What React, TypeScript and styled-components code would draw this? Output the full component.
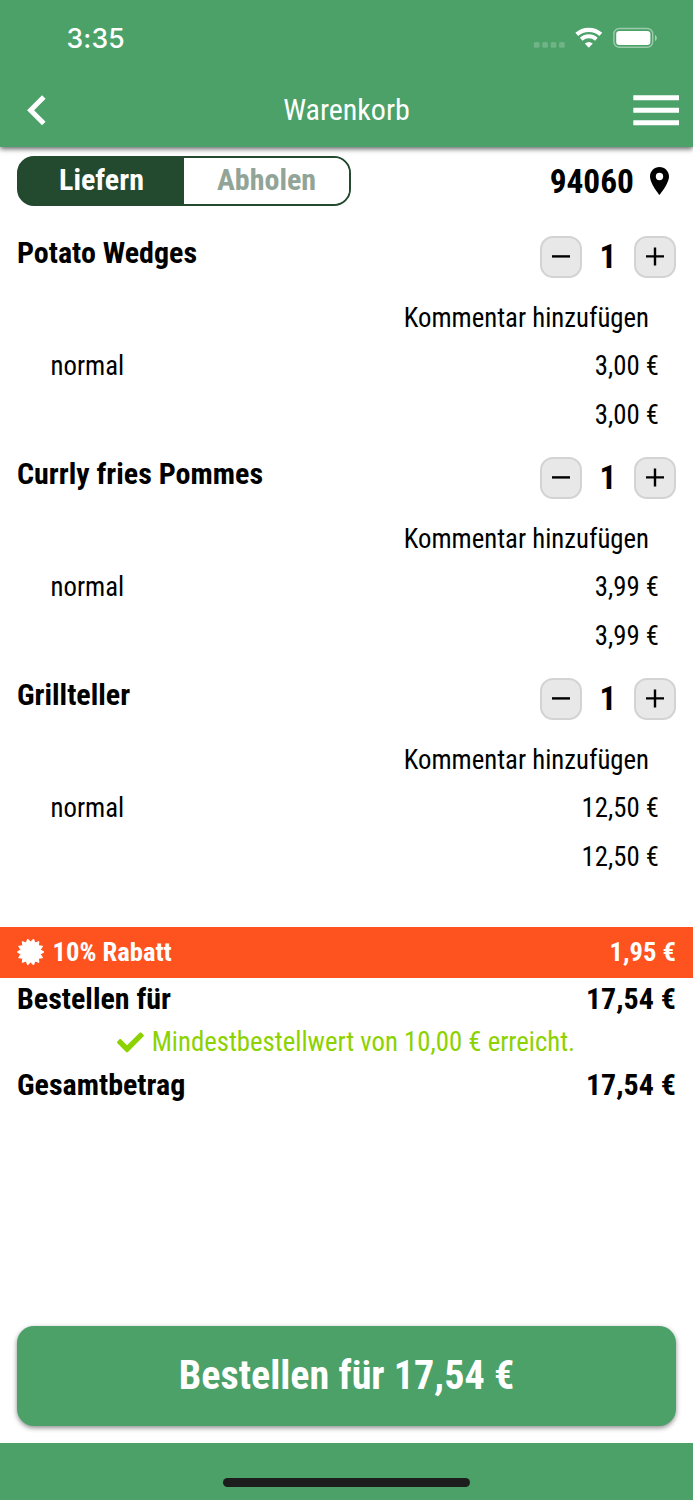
import React from "react";
import styled, { createGlobalStyle } from "styled-components";
import { FaCheck } from "react-icons/fa";

const green = "#4ba168";
const darkGreen = "#23492f";

const Global = createGlobalStyle`
  * { box-sizing: border-box; }
  body { margin: 0; background: #fff; }
  button { font: inherit; color: inherit; padding: 0; }
`;

const Screen = styled.div`
  width: 693px;
  height: 1500px;
  display: flex;
  flex-direction: column;
  background: #fff;
  color: #000;
  font-family: "Roboto Condensed", Roboto, sans-serif;
  font-stretch: 75%;
  font-size: 26.75px;
  overflow: hidden;
`;

const Header = styled.header`
  height: 147px;
  flex: none;
  background: ${green};
  color: #fff;
  box-shadow: 0 2px 5px rgba(0, 0, 0, 0.6);
`;

const StatusBar = styled.div`
  height: 73px;
  display: flex;
  justify-content: space-between;
  align-items: center;
  padding: 3px 36px 0 66.5px;
`;

const Clock = styled.span`
  font-family: Inter, sans-serif;
  font-stretch: normal;
  font-weight: 500;
  font-size: 26.5px;
  letter-spacing: 0.2px;
`;

const NavBar = styled.div`
  height: 73px;
  display: grid;
  grid-template-columns: 72px 1fr 72px;
  align-items: center;
`;

const NavTitle = styled.h1`
  margin: 0;
  font-size: 30px;
  font-weight: 400;
  line-height: 36px;
  text-align: center;
`;

const IconButton = styled.button`
  border: 0;
  background: none;
  display: flex;
`;

const TopRow = styled.div`
  height: 50px;
  margin: 9px 24px 0 17px;
  flex: none;
  display: flex;
  justify-content: space-between;
`;

const Toggle = styled.div`
  width: 334px;
  height: 50px;
  display: flex;
  border: 2px solid ${darkGreen};
  border-radius: 17px;
  background: linear-gradient(90deg, ${darkGreen} 50%, #fff 50%);
  overflow: hidden;
`;

const ToggleOption = styled.button<{ $active?: boolean }>`
  flex: 1;
  border: 0;
  font-size: 30px;
  font-weight: 700;
  line-height: 44px;
  padding-bottom: 2px;
  color: ${(p) => (p.$active ? "#fff" : "#91a497")};
  background: ${(p) => (p.$active ? darkGreen : "#fff")};
`;

const Postcode = styled.div`
  display: flex;
  align-items: center;
  gap: 16px;
  font-size: 33.4px;
  font-weight: 700;
`;

const Pin = styled.svg`
  margin-bottom: 1px;
`;

const Items = styled.section`
  padding-top: 21px;
  height: 721px;
  flex: none;
`;

const Item = styled.article`
  height: 221px;
  padding-top: 9px;
`;

const ItemHead = styled.div`
  height: 58px;
  padding: 0 17px;
  display: flex;
  justify-content: space-between;
`;

const ItemName = styled.h2`
  margin: 0;
  font-size: 30px;
  font-weight: 700;
  line-height: 34px;
`;

const Stepper = styled.div`
  display: grid;
  grid-template-columns: 42px 52px 42px;
  height: 42px;
  align-items: center;
  text-align: center;
  font-size: 33.5px;
  font-weight: 700;
`;

const Quantity = styled.span`
  padding-bottom: 2px;
`;

const StepButton = styled.button`
  width: 42px;
  height: 42px;
  display: flex;
  align-items: center;
  justify-content: center;
  background: #e8e8e8;
  border: 2px solid #d3d3d3;
  border-radius: 13px;
`;

const Line = styled.div<{ $inset?: number }>`
  height: 48.4px;
  line-height: 48.4px;
  padding: 0 ${(p) => p.$inset ?? 34}px 0 50.5px;
  display: flex;
  justify-content: space-between;
`;

const Discount = styled.div`
  height: 51px;
  flex: none;
  background: #fe521f;
  color: #fff;
  font-size: 26.6px;
  font-weight: 700;
  padding: 0 17px 2px;
  display: flex;
  align-items: center;
  gap: 7.5px;
`;

const Amount = styled.span`
  margin-left: auto;
`;

const TotalRow = styled.div`
  height: 43px;
  flex: none;
  padding: 0 17px;
  display: flex;
  font-size: 30px;
  font-weight: 700;
  line-height: 41px;
`;

const MinimumNote = styled.div`
  height: 43px;
  flex: none;
  display: flex;
  align-items: center;
  justify-content: center;
  gap: 8px;
  padding-right: 1px;
  color: #8cd200;
`;

const MinimumText = styled.span`
  padding-bottom: 2px;
`;

const OrderButton = styled.button`
  margin: auto 17px 17px;
  height: 100px;
  flex: none;
  border: 0;
  border-radius: 17px;
  padding-bottom: 2px;
  background: ${green};
  color: #fff;
  font-size: 40.1px;
  font-weight: 700;
  box-shadow: 0 2px 5px rgba(0, 0, 0, 0.45);
`;

const Footer = styled.footer`
  height: 57px;
  flex: none;
  background: ${green};
  display: flex;
  justify-content: center;
  align-items: flex-end;
  padding-bottom: 13.5px;
`;

const HomeIndicator = styled.div`
  width: 247px;
  height: 8.5px;
  border-radius: 5px;
  background: #1d1d1d;
`;

const Step = ({ plus }: { plus?: boolean }) => (
  <StepButton aria-label={plus ? "Mehr" : "Weniger"}>
    <svg width="18" height="20" viewBox="0 0 18 20" stroke="#000" strokeWidth="2.4">
      <path d={plus ? "M0 9.4H18M9 0.4V18.4" : "M0 9.4H18"} />
    </svg>
  </StepButton>
);

const StatusIcons = () => (
  <svg width="124" height="24" viewBox="533 26 124 24">
    <g fill="#fff" fillOpacity="0.2">
      {[533.8, 542.2, 550.6, 559].map((x) => (
        <rect key={x} x={x} y="42" width="5.8" height="5.8" rx="1.5" />
      ))}
    </g>
    <g fill="none" stroke="#fff">
      <path d="M576.8 34.4C583.3 28.3 594.3 28.3 600.8 34.4" strokeWidth="4.2" />
      <path d="M581.2 39.2C585.6 35.3 592 35.3 596.4 39.2" strokeWidth="4" />
    </g>
    <path d="M584.8 43.6Q588.8 40.2 592.8 43.6L588.8 47.8Z" fill="#fff" />
    <rect x="613.9" y="28.5" width="38.8" height="18.8" rx="5.5" fill="none" stroke="#fff" strokeOpacity="0.45" strokeWidth="1.4" />
    <rect x="616.2" y="31" width="34.2" height="14" rx="3.3" fill="#fff" />
    <path d="M655 35c2.4 1 2.4 5 0 6z" fill="#fff" fillOpacity="0.5" />
  </svg>
);

const sealPoints = Array.from({ length: 28 }, (_, i) => {
  const r = i % 2 ? 13.3 : 10;
  const a = (i * Math.PI) / 14;
  return `${13.6 + r * Math.sin(a)},${14 - r * Math.cos(a)}`;
}).join(" ");

const items = [
  { name: "Potato Wedges", price: "3,00 €" },
  { name: "Currly fries Pommes", price: "3,99 €" },
  { name: "Grillteller", price: "12,50 €" },
];

export default function App() {
  return (
    <Screen>
      <Global />
      <Header>
        <StatusBar>
          <Clock>3:35</Clock>
          <StatusIcons />
        </StatusBar>
        <NavBar>
          <IconButton aria-label="Zurück">
            <svg width="72" height="36" viewBox="0 0 72 36">
              <path d="M43.8 5 30.6 18.2 43.8 31.4" fill="none" stroke="#fff" strokeWidth="5" />
            </svg>
          </IconButton>
          <NavTitle>Warenkorb</NavTitle>
          <IconButton aria-label="Menü">
            <svg width="72" height="36" viewBox="0 0 72 36">
              <path d="M12.3 5.8H58M12.3 18.3H58M12.3 30.8H58" stroke="#fff" strokeWidth="5" />
            </svg>
          </IconButton>
        </NavBar>
      </Header>
      <TopRow>
        <Toggle>
          <ToggleOption $active>Liefern</ToggleOption>
          <ToggleOption>Abholen</ToggleOption>
        </Toggle>
        <Postcode>
          <span>94060</span>
          <Pin width="19" height="28" viewBox="0 0 19 28">
            <path d="M9.5 0C4.2 0 0 4.2 0 9.5 0 16.5 9.5 28 9.5 28S19 16.5 19 9.5C19 4.2 14.8 0 9.5 0Zm0 13.2a3.7 3.7 0 1 1 0-7.4 3.7 3.7 0 0 1 0 7.4Z" />
          </Pin>
        </Postcode>
      </TopRow>
      <Items>
        {items.map((item) => (
          <Item key={item.name}>
            <ItemHead>
              <ItemName>{item.name}</ItemName>
              <Stepper>
                <Step />
                <Quantity>1</Quantity>
                <Step plus />
              </Stepper>
            </ItemHead>
            <Line $inset={44}>
              <span />
              <span>Kommentar hinzufügen</span>
            </Line>
            <Line>
              <span>normal</span>
              <span>{item.price}</span>
            </Line>
            <Line>
              <span />
              <span>{item.price}</span>
            </Line>
          </Item>
        ))}
      </Items>
      <Discount>
        <svg width="28" height="28" viewBox="0 0 28 28">
          <polygon points={sealPoints} fill="#fff" stroke="#fff" strokeWidth="1" strokeLinejoin="round" />
        </svg>
        <span>10% Rabatt</span>
        <Amount>1,95 €</Amount>
      </Discount>
      <TotalRow>
        <span>Bestellen für</span>
        <Amount>17,54 €</Amount>
      </TotalRow>
      <MinimumNote>
        <FaCheck size={26.8} />
        <MinimumText>Mindestbestellwert von 10,00 € erreicht.</MinimumText>
      </MinimumNote>
      <TotalRow>
        <span>Gesamtbetrag</span>
        <Amount>17,54 €</Amount>
      </TotalRow>
      <OrderButton>Bestellen für 17,54 €</OrderButton>
      <Footer>
        <HomeIndicator />
      </Footer>
    </Screen>
  );
}
